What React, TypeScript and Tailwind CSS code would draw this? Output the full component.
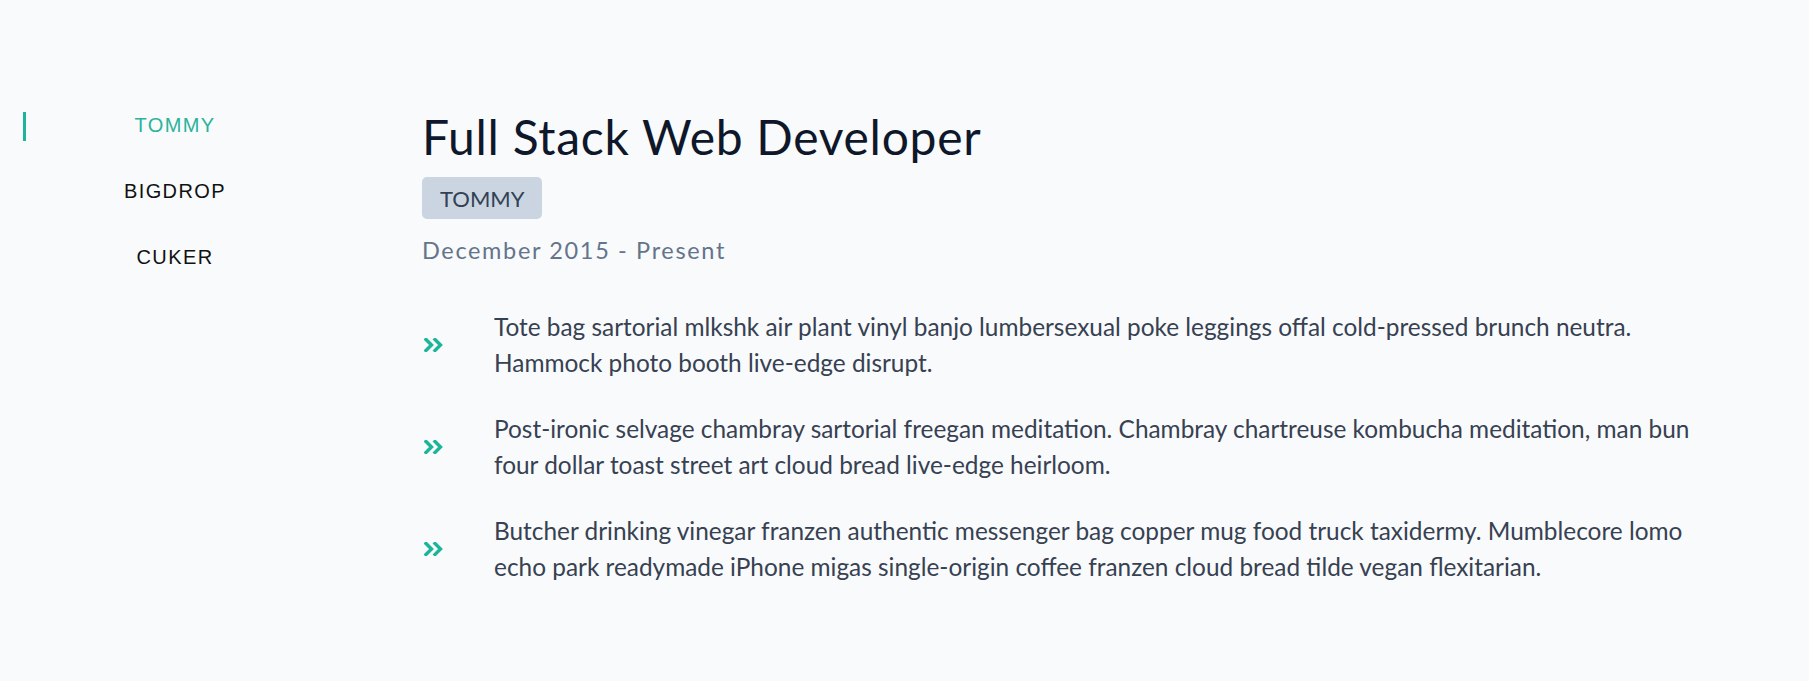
import React from "react";

const items = [
  "Tote bag sartorial mlkshk air plant vinyl banjo lumbersexual poke leggings offal cold-pressed brunch neutra. Hammock photo booth live-edge disrupt.",
  "Post-ironic selvage chambray sartorial freegan meditation. Chambray chartreuse kombucha meditation, man bun four dollar toast street art cloud bread live-edge heirloom.",
  "Butcher drinking vinegar franzen authentic messenger bag copper mug food truck taxidermy. Mumblecore lomo echo park readymade iPhone migas single-origin coffee franzen cloud bread tilde vegan flexitarian.",
];

function Chevrons() {
  return (
    <svg width="20" height="14" viewBox="0 0 20 14" fill="none" className="shrink-0">
      <path d="M2 1.5 L7.5 7 L2 12.5" stroke="#1cb59b" strokeWidth="3.4" strokeLinecap="square" strokeLinejoin="miter" />
      <path d="M11 1.5 L16.5 7 L11 12.5" stroke="#1cb59b" strokeWidth="3.4" strokeLinecap="square" strokeLinejoin="miter" />
    </svg>
  );
}

export default function App() {
  return (
    <div className="min-h-[681px] w-full bg-[#f8fafc] flex flex-row">
      <nav className="ml-[23px] w-[304px] pt-[112px] flex flex-col gap-[36.5px] font-['Liberation_Sans',Arial,sans-serif] text-[20px] tracking-[0.07em]">
        <div className="h-[29px] border-l-[3px] border-[#1cb59b] text-[#2bb39b] flex items-center justify-center pr-[3px] pb-[3px]">
          TOMMY
        </div>
        <div className="h-[29px] text-[#111111] flex items-center justify-center pb-[2px]">BIGDROP</div>
        <div className="h-[29px] text-[#111111] flex items-center justify-center pb-[2px]">CUKER</div>
      </nav>
      <main className="ml-[95px] pt-[108.5px] w-[1300px] font-['Lato','Noto_Sans',sans-serif]">
        <h1 className="text-[48px] leading-[56px] text-[#0f172a] font-normal tracking-[0.015em]">
          Full Stack Web Developer
        </h1>
        <div className="mt-[12.5px] inline-flex h-[42px] items-center px-[18px] rounded-[5px] bg-[#cbd5e1] text-[22px] text-[#334155]">
          TOMMY
        </div>
        <div className="mt-[15px] text-[23.5px] leading-[32px] text-[#64748b] tracking-[0.07em]">
          December 2015 - Present
        </div>
        <ul className="mt-[43px] flex flex-col gap-[30px]">
          {items.map((t, i) => (
            <li key={i} className="flex flex-row items-center">
              <div className="w-[72px] shrink-0 pl-[2px] flex items-center">
                <Chevrons />
              </div>
              <p className="w-[1225px] text-[24.4px] leading-[36px] text-[#374151]">{t}</p>
            </li>
          ))}
        </ul>
      </main>
    </div>
  );
}
